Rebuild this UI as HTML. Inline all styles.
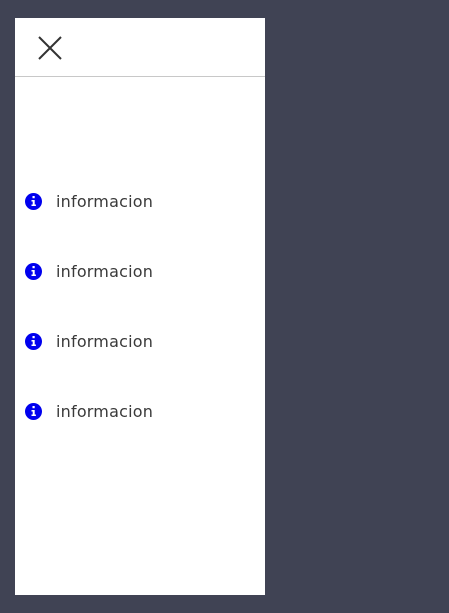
<!DOCTYPE html>
<html><head><style>
body{margin:0;width:449px;height:613px;background:#404354;position:relative;overflow:hidden;font-family:"DejaVu Sans",sans-serif}
.p{position:absolute;left:15px;top:18px;width:250px;height:577px;background:#fff}
.hr{position:absolute;left:0;top:58px;width:250px;height:1px;background:#c8c8c8}
.it{position:absolute;left:10px;height:20px;display:flex;align-items:center;font-size:16px;color:#3a3a3a;letter-spacing:0.2px}
.it svg{margin-right:14px}
.it span{position:relative;top:0px}
</style></head><body>
<div class="p">
<svg style="position:absolute;left:23px;top:18px" width="24" height="24" viewBox="0 0 24 24"><path d="M1 1L23 23M23 1L1 23" stroke="#333" stroke-width="2"/></svg>
<div class="hr"></div>
<div class="it" style="top:173px"><svg width="17" height="17" viewBox="0 0 17 17"><circle cx="8.5" cy="8.5" r="8.5" fill="#0000ee"/><rect x="7.5" y="3" width="2.2" height="2.2" fill="#fff"/><path d="M6.5 7h3.2v4.5h1.2v1.5h-4.4v-1.5h1.2v-3h-1.2z" fill="#fff"/></svg><span>informacion</span></div>
<div class="it" style="top:243px"><svg width="17" height="17" viewBox="0 0 17 17"><circle cx="8.5" cy="8.5" r="8.5" fill="#0000ee"/><rect x="7.5" y="3" width="2.2" height="2.2" fill="#fff"/><path d="M6.5 7h3.2v4.5h1.2v1.5h-4.4v-1.5h1.2v-3h-1.2z" fill="#fff"/></svg><span>informacion</span></div>
<div class="it" style="top:313px"><svg width="17" height="17" viewBox="0 0 17 17"><circle cx="8.5" cy="8.5" r="8.5" fill="#0000ee"/><rect x="7.5" y="3" width="2.2" height="2.2" fill="#fff"/><path d="M6.5 7h3.2v4.5h1.2v1.5h-4.4v-1.5h1.2v-3h-1.2z" fill="#fff"/></svg><span>informacion</span></div>
<div class="it" style="top:383px"><svg width="17" height="17" viewBox="0 0 17 17"><circle cx="8.5" cy="8.5" r="8.5" fill="#0000ee"/><rect x="7.5" y="3" width="2.2" height="2.2" fill="#fff"/><path d="M6.5 7h3.2v4.5h1.2v1.5h-4.4v-1.5h1.2v-3h-1.2z" fill="#fff"/></svg><span>informacion</span></div>
</div>
</body></html>
